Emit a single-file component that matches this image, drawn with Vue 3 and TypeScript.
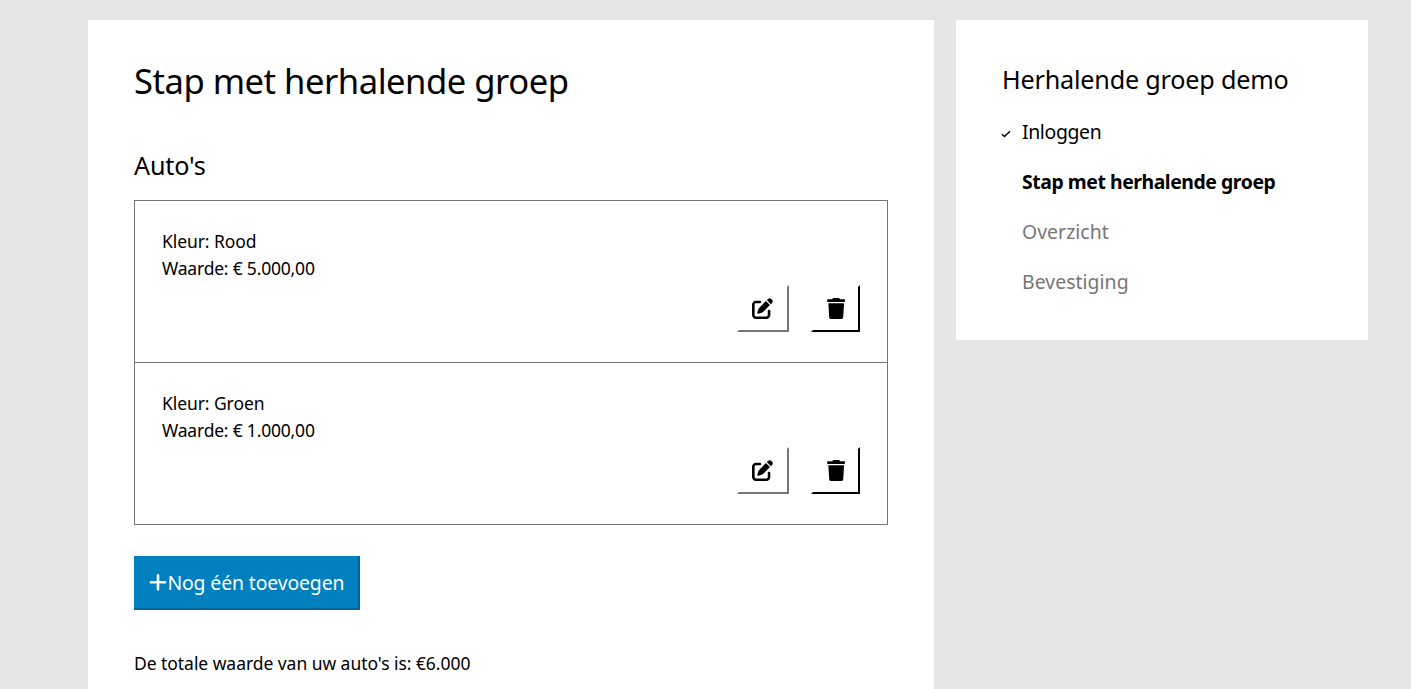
<script setup lang="ts">
interface Car { kleur: string; waarde: string }
interface Step { label: string; state: 'done' | 'current' | 'todo' }

const cars: Car[] = [
  { kleur: 'Rood', waarde: '€ 5.000,00' },
  { kleur: 'Groen', waarde: '€ 1.000,00' },
]
const steps: Step[] = [
  { label: 'Inloggen', state: 'done' },
  { label: 'Stap met herhalende groep', state: 'current' },
  { label: 'Overzicht', state: 'todo' },
  { label: 'Bevestiging', state: 'todo' },
]
</script>

<template>
  <div class="page">
    <main class="card main">
      <h1>Stap met herhalende groep</h1>
      <h2>Auto's</h2>
      <ul class="group">
        <li v-for="car in cars" :key="car.kleur" class="item">
          <p class="line color">Kleur: {{ car.kleur }}</p>
          <p class="line">Waarde: {{ car.waarde }}</p>
          <div class="actions">
            <button class="action edit" type="button" aria-label="Bewerken">
              <svg viewBox="0 0 512 512" width="21" height="21"><path d="M471.6 21.7c-21.9-21.9-57.3-21.9-79.2 0L362.3 51.7l97.9 97.9 30.1-30.1c21.9-21.9 21.9-57.3 0-79.2L471.6 21.7zm-299.2 220c-6.1 6.1-10.8 13.6-13.5 21.9l-29.6 88.8c-2.9 8.6-.6 18.1 5.8 24.6s15.9 8.7 24.6 5.8l88.8-29.6c8.2-2.7 15.7-7.4 21.9-13.5L437.7 172.3 339.7 74.3 172.4 241.7zM96 64C43 64 0 107 0 160V416c0 53 43 96 96 96H352c53 0 96-43 96-96V320c0-17.7-14.3-32-32-32s-32 14.3-32 32v96c0 17.7-14.3 32-32 32H96c-17.7 0-32-14.3-32-32V160c0-17.7 14.3-32 32-32h96c17.7 0 32-14.3 32-32s-14.3-32-32-32H96z" /></svg>
            </button>
            <button class="action delete" type="button" aria-label="Verwijderen">
              <svg viewBox="0 0 448 512" width="18.4" height="21"><path d="M135.2 17.7L128 32H32C14.3 32 0 46.3 0 64S14.3 96 32 96H416c17.7 0 32-14.3 32-32s-14.3-32-32-32H320l-7.2-14.3C307.4 6.8 296.3 0 284.2 0H163.8c-12.1 0-23.2 6.8-28.6 17.7zM416 128H32L53.2 467c1.6 25.3 22.6 45 47.9 45H346.9c25.3 0 46.3-19.7 47.9-45L416 128z" /></svg>
            </button>
          </div>
        </li>
      </ul>
      <button class="add" type="button">
        <svg viewBox="0 0 448 512" width="18" height="20.6"><path d="M256 80c0-17.7-14.3-32-32-32s-32 14.3-32 32V224H48c-17.7 0-32 14.3-32 32s14.3 32 32 32H192V432c0 17.7 14.3 32 32 32s32-14.3 32-32V288H400c17.7 0 32-14.3 32-32s-14.3-32-32-32H256V80z" /></svg>
        <span>Nog één toevoegen</span>
      </button>
      <p class="total">De totale waarde van uw auto's is: €6.000</p>
    </main>
    <aside class="card side">
      <h2>Herhalende groep demo</h2>
      <ol class="steps">
        <li v-for="step in steps" :key="step.label" :class="['step', step.state]">
          <span class="mark">
            <svg v-if="step.state === 'done'" viewBox="0 0 10 8" width="10" height="8"><path d="M1 4.2 3.4 6.6 9 1.2" fill="none" stroke="#000" stroke-width="1.4" /></svg>
          </span>
          <span>{{ step.label }}</span>
        </li>
      </ol>
    </aside>
  </div>
</template>

<style>
body { margin: 0; background: #e6e6e6; overflow: hidden; }
</style>

<style scoped>
.page {
  display: flex;
  align-items: flex-start;
  gap: 22px;
  box-sizing: border-box;
  height: 689px;
  overflow: hidden;
  padding: 20px 43px 0 88px;
  background: #e6e6e6;
  color: #000;
  font-family: "Noto Sans", "Open Sans", sans-serif;
  font-size: 17.5px;
}
h1, h2, p, ul, ol { margin: 0; padding: 0; font-weight: 400; list-style: none; }
.card { box-sizing: border-box; background: #fff; padding: 0 46px; }
.main { width: 846px; height: 720px; }
.side { width: 412px; height: 320px; padding-top: 38px; }
h1 { padding-top: 37px; font-size: 34.6px; line-height: 48px; letter-spacing: -0.48px; }
h2 { font-size: 25.2px; line-height: 42px; letter-spacing: -0.2px; }
.main h2 { margin: 39px 0 14px; }
.group { border: 1px solid #767676; }
.item { box-sizing: border-box; height: 161px; padding: 27px; }
.item + .item { height: 162px; border-top: 1px solid #767676; }
.line { line-height: 27px; letter-spacing: -0.2px; }
.line.color { letter-spacing: -0.08px; }
.actions { display: flex; justify-content: flex-end; gap: 22px; margin-top: 3px; }
.action {
  display: flex;
  align-items: center;
  box-sizing: border-box;
  width: 52px;
  height: 47px;
  padding: 0 0 0 13px;
  border: 2px solid transparent;
  border-right-color: #767676;
  border-bottom-color: #767676;
  background: #fff;
}
.action.delete { width: 49px; padding-left: 13.6px; border-right-color: #000; border-bottom-color: #000; }
.add {
  display: flex;
  align-items: center;
  box-sizing: border-box;
  width: 226px;
  height: 54px;
  margin-top: 31px;
  padding: 1px 0 0 15.4px;
  border: 0 solid #006699;
  border-width: 0 2px 2px 0;
  background: #0080bf;
  color: #fff;
  font: inherit;
  font-size: 19.4px;
  line-height: 28px;
  letter-spacing: -0.12px;
  white-space: nowrap;
}
.add svg { fill: #fff; flex: none; }
.add span { margin-top: 1px; }
.total { margin-top: 40px; line-height: 27px; letter-spacing: -0.05px; }
.steps { margin-top: 7px; }
.step { display: flex; height: 50px; align-items: center; font-size: 19.4px; line-height: 30px; white-space: nowrap; }
.mark { display: flex; width: 20px; margin-top: 3px; }
.mark svg { margin-left: -1px; }
.done { letter-spacing: -0.35px; }
.current { font-weight: 700; letter-spacing: -0.44px; }
.todo { color: #767676; letter-spacing: 0.05px; }
</style>
